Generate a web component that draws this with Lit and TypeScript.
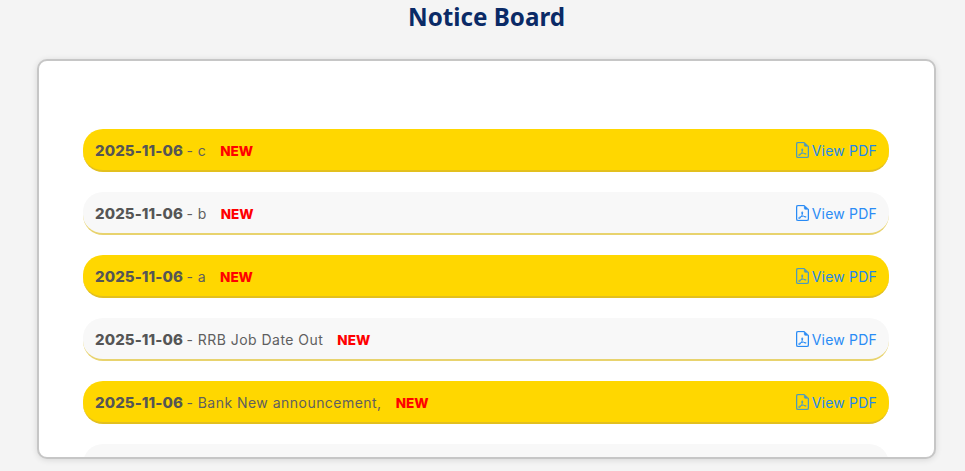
import { LitElement, html, css, svg } from "lit";
import { customElement } from "lit/decorators.js";

const notices = [
  { date: "2025-11-06", title: "c" },
  { date: "2025-11-06", title: "b" },
  { date: "2025-11-06", title: "a" },
  { date: "2025-11-06", title: "RRB Job Date Out" },
  { date: "2025-11-06", title: "Bank New announcement," },
];

const pdfIcon = svg`<svg class="icon" viewBox="2 0 12 16" width="13" height="16" preserveAspectRatio="none" fill="currentColor" aria-hidden="true">
  <path d="M14 14V4.5L9.5 0H4a2 2 0 0 0-2 2v12a2 2 0 0 0 2 2h8a2 2 0 0 0 2-2zM9.5 3A1.5 1.5 0 0 0 11 4.5h2V14a1 1 0 0 1-1 1H4a1 1 0 0 1-1-1V2a1 1 0 0 1 1-1h5.5v2z" stroke="currentColor" stroke-width="0.3"/>
  <path d="M4.6 13.7a.8.8 0 0 1-.4-.3c-.2-.3-.1-.6.1-.9.2-.3.6-.6 1-.8.4-.2.8-.4 1.2-.5.3-.6.6-1.2.8-1.8-.2-.4-.3-.8-.4-1.2 0-.4 0-.7.1-1 .1-.3.3-.5.6-.6.2-.1.4-.1.6 0 .2.1.3.3.4.5v.9c-.1.5-.2 1-.4 1.6.3.5.6.9.9 1.3.5 0 1 0 1.4.1.4.1.8.2 1 .5.1.2.2.4.1.6 0 .2-.2.4-.4.5-.2.1-.4.1-.6 0-.6-.2-1.1-.6-1.6-1.1-.7.1-1.4.2-2.1.5-.3.6-.7 1.1-1 1.5-.3.3-.6.4-.9.2zm.9-1.5c-.4.2-.7.4-.8.6-.1.2-.1.3 0 .3.1 0 .3-.2.8-.9zm2.2-4.5c.1-.4.2-.8.2-1.1 0-.2 0-.3-.1-.3-.1 0-.2.1-.2.4v1zm.1 1.7c-.1.4-.3.8-.5 1.2.4-.1.8-.2 1.3-.3-.3-.2-.5-.5-.8-.9zm2.3 1.5c.2.2.5.4.7.5.1 0 .2 0 .2-.1 0-.1 0-.1-.1-.2-.2-.1-.4-.2-.8-.2z"/>
</svg>`;

@customElement("app-root")
export class AppRoot extends LitElement {
  static styles = css`
    :host {
      display: block;
      height: 471px;
      overflow: hidden;
      background: #f4f4f4;
      font-family: "Inter", "Liberation Sans", sans-serif;
    }
    .wrap {
      width: 899px;
      margin-left: 37px;
    }
    h1 {
      margin: 0;
      height: 59px;
      box-sizing: border-box;
      text-align: center;
      font-family: "Noto Sans", sans-serif;
      font-size: 24.2px;
      line-height: 33px;
      font-weight: 700;
      color: #0a2a66;
    }
    .card {
      box-sizing: border-box;
      height: 400px;
      padding: 68px 45px 0 44px;
      background: #fff;
      border: 2px solid #c6c6c6;
      border-radius: 10px;
      box-shadow: 0 1px 6px rgba(0, 0, 0, 0.12);
      overflow: hidden;
    }
    .list {
      display: flex;
      flex-direction: column;
      gap: 20px;
    }
    .row {
      box-sizing: border-box;
      height: 43px;
      padding: 1px 12px 0;
      display: flex;
      align-items: center;
      justify-content: space-between;
      border-radius: 20px;
      border-bottom: 2px solid #e8d36e;
      font-size: 14px;
      color: #5f5f5f;
    }
    .row:nth-child(odd) {
      background: #ffd700;
      border-bottom-color: #e3c01e;
    }
    .row:nth-child(even) {
      background: #f8f8f8;
    }
    .left {
      display: flex;
      align-items: baseline;
      white-space: pre;
    }
    .date {
      font-size: 15px;
      font-weight: 800;
      color: #555;
      letter-spacing: 0.1px;
    }
    .title {
      margin-left: -1px;
      letter-spacing: 0.47px;
    }
    .new {
      margin-left: 14px;
      color: #ff0000;
      font-size: 13.5px;
      font-weight: 800;
    }
    .pdf {
      display: flex;
      align-items: center;
      gap: 3px;
      color: #1e88ee;
      text-decoration: none;
      letter-spacing: 0.2px;
    }
    .row:nth-child(odd) .icon {
      color: #4c9ac0;
    }
    .row:nth-child(even) .pdf {
      color: #2a8cf5;
    }
    .filler {
      height: 43px;
      border-radius: 20px;
      background: #f8f8f8;
    }
  `;

  render() {
    return html`
      <div class="wrap">
        <h1>Notice Board</h1>
        <div class="card">
          <div class="list">
            ${notices.map(
              (n) => html`
                <div class="row">
                  <span class="left"
                    ><span class="date">${n.date}</span
                    ><span class="title"> - ${n.title}</span
                    ><span class="new">NEW</span></span
                  >
                  <a class="pdf" href="#">${pdfIcon}View PDF</a>
                </div>
              `
            )}
            <div class="filler"></div>
          </div>
        </div>
      </div>
    `;
  }
}
